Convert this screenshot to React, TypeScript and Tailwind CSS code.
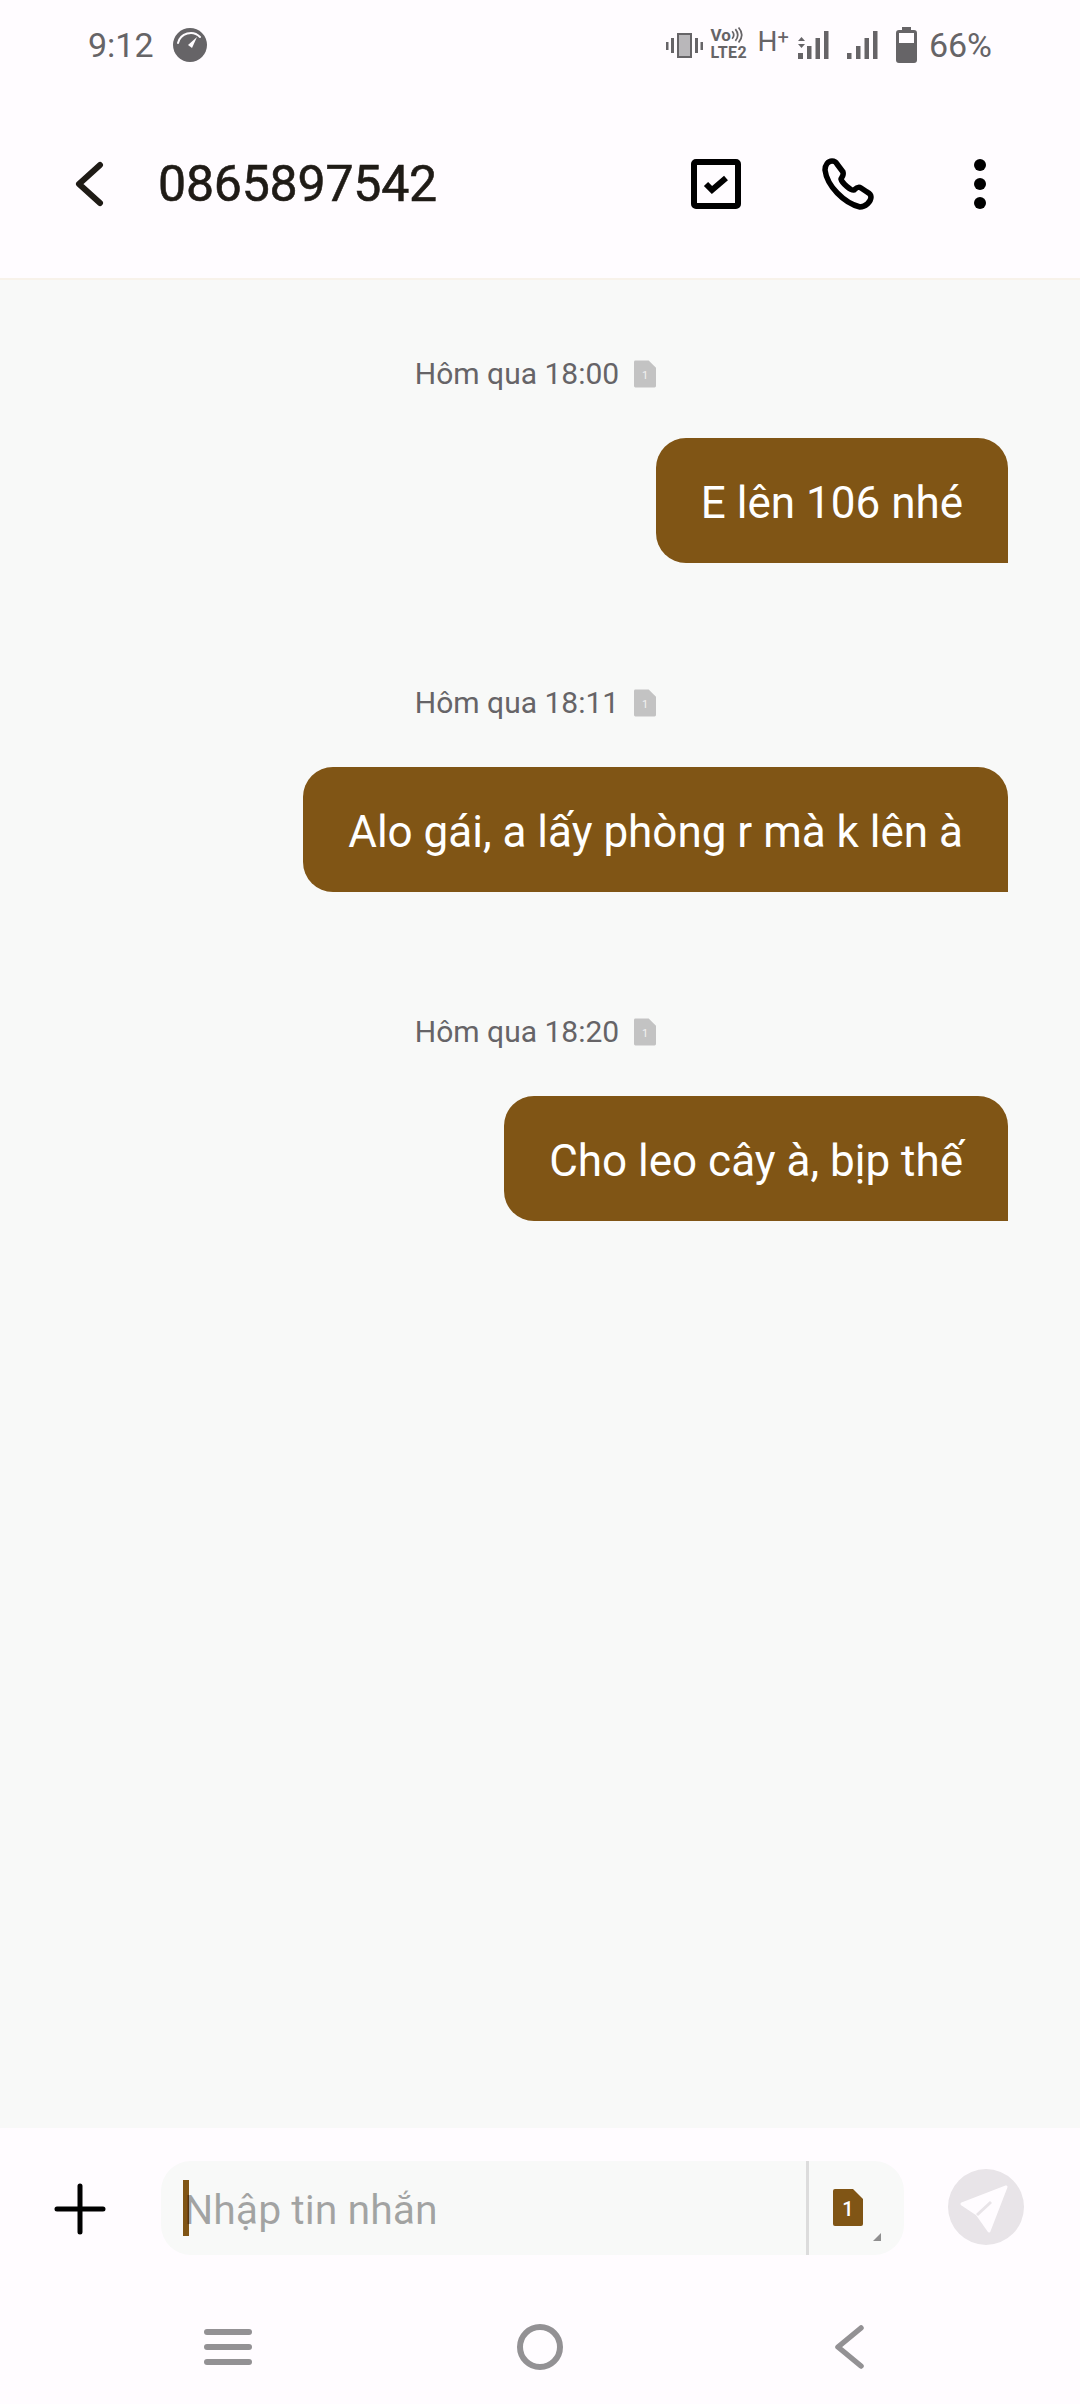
const messages = [
  { time: 'Hôm qua 18:00', text: 'E lên 106 nhé' },
  { time: 'Hôm qua 18:11', text: 'Alo gái, a lấy phòng r mà k lên à' },
  { time: 'Hôm qua 18:20', text: 'Cho leo cây à, bịp thế' },
];

function GaugeIcon() {
  return (
    <svg width="34" height="34" viewBox="0 0 34 34">
      <circle cx="17" cy="17" r="17" fill="#666467" />
      <path d="M5 15 A13 13 0 0 1 27 9" fill="none" stroke="#fffcff" strokeWidth="2" strokeLinecap="round" />
      <path d="M15 17 L24 9 L19 20 Z" fill="#fffcff" />
    </svg>
  );
}

function VibrateIcon() {
  return (
    <svg width="37" height="25" viewBox="0 0 37 25" fill="#666467">
      <rect x="0" y="9" width="2.5" height="8" />
      <rect x="5" y="5" width="3" height="15" />
      <path fillRule="evenodd" d="M11 0h15v25H11z M13 2v21h11V2z" />
      <rect x="13" y="2" width="11" height="21" fill="#b9b7ba" />
      <rect x="29" y="5" width="3" height="15" />
      <rect x="34.5" y="9" width="2.5" height="8" />
    </svg>
  );
}

function VoLte() {
  return (
    <div className="relative flex h-[36px] w-[37px] flex-col text-[#666467] font-bold leading-none">
      <span className="text-[17px] leading-[17px]">Vo</span>
      <span className="text-[16px] leading-[18px] tracking-[0.4px] whitespace-nowrap">LTE2</span>
      <svg className="absolute right-[4px] top-[0px]" width="13" height="16" viewBox="0 0 12 15" fill="none" stroke="#666467" strokeWidth="1.6">
        <path d="M1 4 Q4 7.5 1 11" />
        <path d="M4 2 Q8.5 7.5 4 13" />
        <path d="M7 0.5 Q13 7.5 7 14.5" />
      </svg>
    </div>
  );
}

function SignalIcon({ arrows }: { arrows?: boolean }) {
  return (
    <svg width="31" height="28" viewBox="0 0 31 28" fill="#666467">
      {arrows ? (
        <>
          <path d="M3.5 6 L7 10 H0 Z" />
          <path d="M3.5 17 L0 13 H7 Z" />
          <rect x="0" y="22" width="5" height="6" />
        </>
      ) : (
        <rect x="0" y="22" width="4.5" height="6" />
      )}
      <rect x="9" y="15" width="4.5" height="13" />
      <rect x="17.5" y="7" width="4.5" height="21" />
      <rect x="26" y="0" width="4.5" height="28" />
    </svg>
  );
}

function BatteryIcon() {
  return (
    <svg width="21" height="36" viewBox="0 0 21 36">
      <path d="M6 0h9v3h3a3 3 0 0 1 3 3v27a3 3 0 0 1-3 3H3a3 3 0 0 1-3-3V6a3 3 0 0 1 3-3h3z" fill="#666467" />
      <rect x="3" y="6" width="15" height="10" fill="#fffcff" />
    </svg>
  );
}

function SimBadge({ muted }: { muted?: boolean }) {
  return (
    <div className={muted ? 'relative w-[22px] h-[28px] flex items-center justify-center' : 'relative w-[30px] h-[37px] flex items-center justify-center'}>
      <svg className="absolute inset-0" width={muted ? 22 : 30} height={muted ? 28 : 37} viewBox="0 0 30 37">
        <path d="M2 0H20L30 10V35a2 2 0 0 1-2 2H2a2 2 0 0 1-2-2V2a2 2 0 0 1 2-2z" fill={muted ? '#c3c3c3' : '#805515'} />
      </svg>
      <span className={muted ? 'relative mt-[2px] text-[11px] leading-none text-[#f2f2f2]' : 'relative mt-[3px] text-[20px] leading-none font-medium text-white'}>1</span>
    </div>
  );
}

function PhoneIcon() {
  return (
    <svg width="52" height="52" viewBox="0 0 52 52" fill="none" stroke="#000" strokeWidth="5.5" strokeLinejoin="round">
      <path d="M10 3C6 3 3 7 3 12C5 28 22 45 38 49C43 49 49 44 49 39C49 37 47 35 45 34L39 30C36 28 34 30 32 32C29 33 20 25 19 21C20 19 22 17 21 14L15 6C14 4 12 3 10 3Z" />
    </svg>
  );
}

export default function App() {
  return (
    <div className="flex h-[2404px] w-[1080px] flex-col overflow-hidden bg-[#fffcff] font-['Roboto','Noto_Sans',sans-serif]">
      {/* status bar */}
      <div className="flex h-[88px] items-center justify-between pl-[88px] pr-[88px] pt-[2px] text-[#666467]">
        <div className="flex items-center gap-[19px]">
          <span className="text-[34px] leading-none">9:12</span>
          <GaugeIcon />
        </div>
        <div className="flex items-center">
          <VibrateIcon />
          <div className="ml-[8px]"><VoLte /></div>
          <div className="ml-[10px] mb-[6px] flex items-start leading-none">
            <span className="text-[28px]">H</span>
            <span className="text-[20px] -mt-[1px]">+</span>
          </div>
          <div className="ml-[9px]"><SignalIcon arrows /></div>
          <div className="ml-[18px]"><SignalIcon /></div>
          <div className="ml-[18px]"><BatteryIcon /></div>
          <span className="ml-[12px] text-[34px] leading-none">66%</span>
        </div>
      </div>

      {/* header */}
      <div className="flex h-[192px] items-center border-b-2 border-[#f8f2ea] pt-[2px] pl-[74px] pr-[94px]">
        <svg width="30" height="46" viewBox="0 0 30 46" fill="none" stroke="#1f1b16" strokeWidth="6" strokeLinecap="round" strokeLinejoin="round">
          <path d="M26 4 L5 23 L26 42" />
        </svg>
        <h1 className="ml-[54px] text-[50px] leading-none font-normal tracking-[-0.2px] text-[#1f1b16] [-webkit-text-stroke:0.6px_#1f1b16]">0865897542</h1>
        <div className="ml-auto flex items-center">
          <div className="flex h-[50px] w-[50px] items-center justify-center rounded-[5px] border-[6px] border-black">
            <svg width="26" height="22" viewBox="0 0 26 22" fill="none" stroke="#000" strokeWidth="6">
              <path d="M3 11 L9 17 L23 5" />
            </svg>
          </div>
          <div className="ml-[81px]"><PhoneIcon /></div>
          <div className="ml-[100px] flex flex-col gap-[7px]">
            <div className="h-[12px] w-[12px] rounded-full bg-black" />
            <div className="h-[12px] w-[12px] rounded-full bg-black" />
            <div className="h-[12px] w-[12px] rounded-full bg-black" />
          </div>
        </div>
      </div>

      {/* messages */}
      <div className="flex flex-1 flex-col bg-[#f8f9f8] pt-[74px]">
        {messages.map((m) => (
          <div key={m.time} className="mb-[120px] flex flex-col items-end">
            <div className="flex h-[40px] w-full items-center justify-center pr-[9px] text-[#666467]">
              <span className="text-[30px] leading-none">{m.time}</span>
              <div className="ml-[15px]"><SimBadge muted /></div>
            </div>
            <div className="mr-[72px] mt-[44px] flex h-[125px] items-center rounded-[30px] rounded-br-none bg-[#805515] px-[45px] pt-[4px] text-[44px] leading-none text-white">
              {m.text}
            </div>
          </div>
        ))}
      </div>

      {/* composer */}
      <div className="flex h-[162px] items-center pb-[2px] pl-[54px] pr-[36px]">
        <svg className="mt-[2px]" width="52" height="52" viewBox="0 0 52 52" stroke="#000" strokeWidth="5" strokeLinecap="round">
          <path d="M26 3V49M3 26H49" />
        </svg>
        <div className="ml-[55px] flex h-[94px] w-[743px] items-center rounded-[30px] bg-[#f8f9f8]">
          <div className="flex flex-1 items-center pl-[22px]">
            <div className="h-[56px] w-[6px] bg-[#805515]" />
            <span className="-ml-[5px] mt-[4px] text-[41px] leading-none text-black/35">Nhập tin nhắn</span>
          </div>
          <div className="relative flex h-full w-[98px] justify-start border-l-[3px] border-[#dcdcdc] pl-[24px] pt-[28px]">
            <SimBadge />
            <svg className="absolute bottom-[14px] right-[23px]" width="8" height="8" viewBox="0 0 8 8" fill="#8f8f8f">
              <path d="M8 0V8H0Z" />
            </svg>
          </div>
        </div>
        <div className="ml-[44px] -mt-[2px] flex h-[76px] w-[76px] items-center justify-center rounded-full bg-[#e8e4e8]">
          <svg width="76" height="76" viewBox="0 0 76 76">
            <path d="M58 18L14 35L29 45L41 62Z" fill="#fffcff" stroke="#fffcff" strokeWidth="3" strokeLinejoin="round" />
            <path d="M29 46L43 33" stroke="#e8e4e8" strokeWidth="3" />
          </svg>
        </div>
      </div>

      {/* nav bar */}
      <div className="flex h-[114px] items-center pl-[204px]">
        <div className="flex w-[48px] flex-col gap-[9px]">
          <div className="h-[6px] rounded-full bg-[#939194]" />
          <div className="h-[6px] rounded-full bg-[#939194]" />
          <div className="h-[6px] rounded-full bg-[#939194]" />
        </div>
        <div className="ml-[265px] h-[46px] w-[46px] rounded-full border-[6px] border-[#939194]" />
        <svg className="ml-[272px]" width="30" height="44" viewBox="0 0 30 44" fill="none" stroke="#939194" strokeWidth="5.5" strokeLinecap="round" strokeLinejoin="round">
          <path d="M26 3L3 22L26 41" />
        </svg>
      </div>
    </div>
  );
}
